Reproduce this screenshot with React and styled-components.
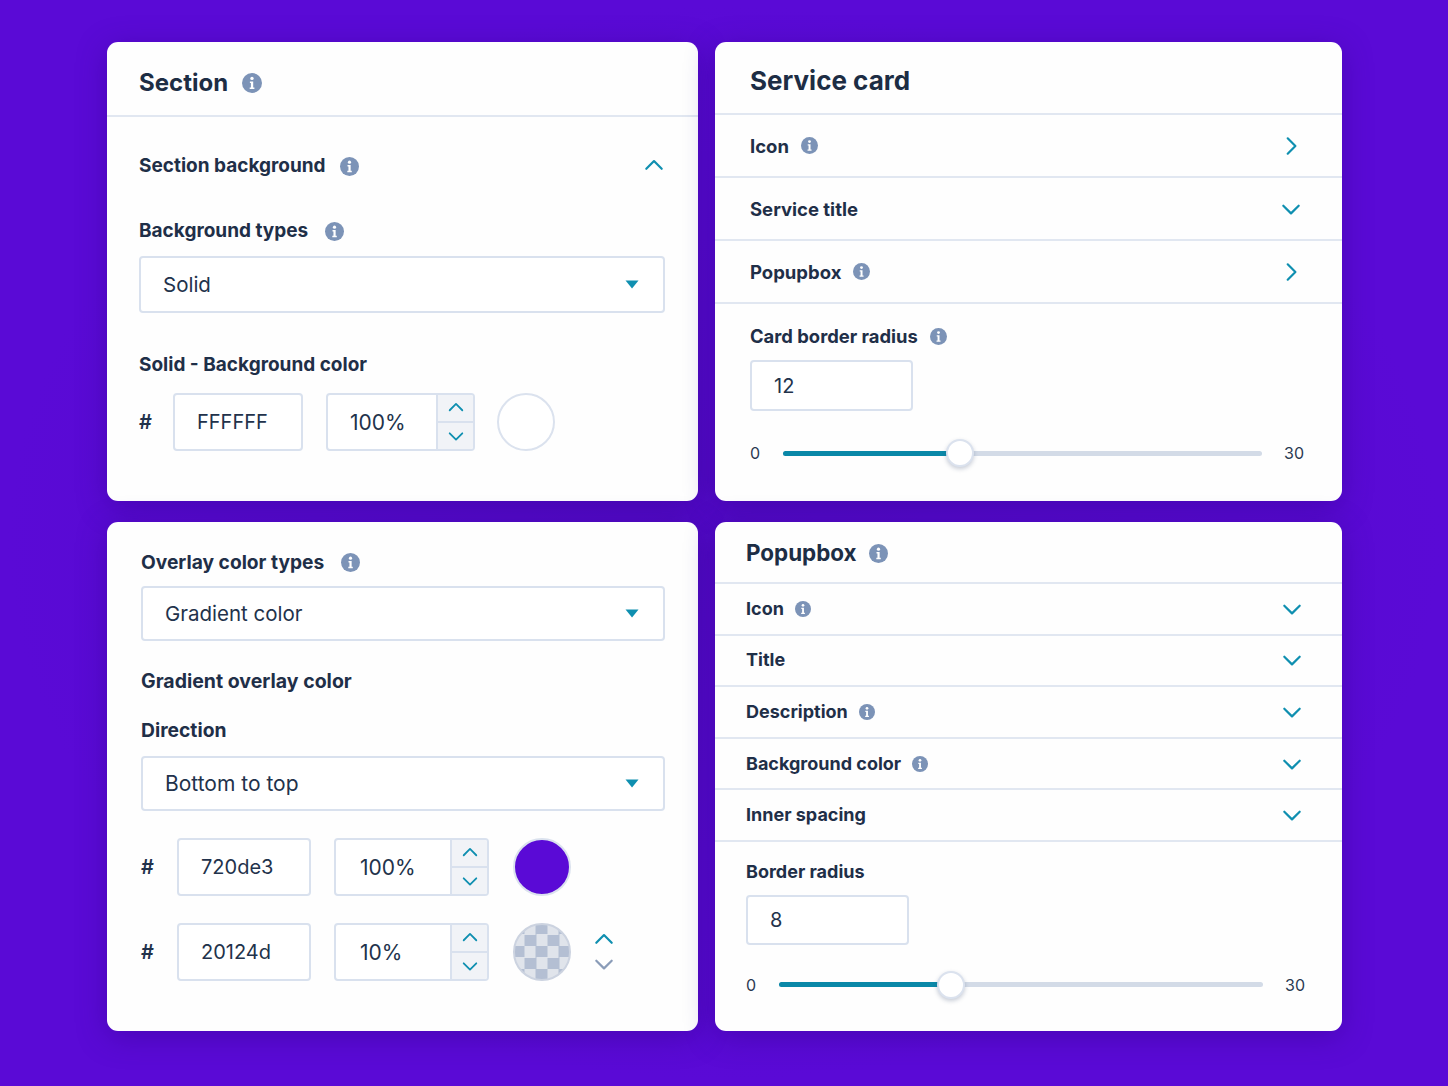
import styled, { createGlobalStyle } from "styled-components";

const GlobalStyle = createGlobalStyle`
  html, body {
    margin: 0;
    padding: 0;
    background: #5a0ad6;
  }
  * {
    box-sizing: border-box;
  }
`;

const InfoIcon = ({ size = 19 }) => (
  <svg width={size} height={size} viewBox="0 0 20 20" style={{ flexShrink: 0 }}>
    <circle cx="10" cy="10" r="10" fill="#7c93b7" />
    <circle cx="10" cy="5.4" r="1.7" fill="#fff" />
    <path d="M7.9 8.4h3.3v6.2h1.2v1.5H7.7v-1.5h1.2V9.9h-1z" fill="#fff" />
  </svg>
);

const Chevron = ({ dir = "down", size = 20, width = 2, color = "#0f8fb0" }) => {
  const paths = {
    up: "M3 12.5l7-7 7 7",
    down: "M3 7l7 7 7-7",
    right: "M7 3l7 7-7 7",
  };
  return (
    <svg width={size} height={size} viewBox="0 0 20 20" fill="none" style={{ flexShrink: 0 }}>
      <path d={paths[dir]} stroke={color} strokeWidth={width} strokeLinecap="round" strokeLinejoin="round" />
    </svg>
  );
};

const Caret = () => (
  <svg width="14" height="9" viewBox="0 0 14 9" style={{ flexShrink: 0 }}>
    <path d="M0.5 0.5h13L7 8.5z" fill="#0f8fb0" />
  </svg>
);

const Page = styled.div`
  width: 1448px;
  height: 1086px;
  padding: 42px 0 0 107px;
  background: radial-gradient(ellipse at center, #530ac8 0%, #5a0ad6 70%);
  font-family: Inter, "Noto Sans", sans-serif;
  color: #1f2f48;
  overflow: hidden;
`;

const Grid = styled.div`
  display: grid;
  grid-template-columns: 591px 627px;
  grid-template-rows: 459px 509px;
  column-gap: 17px;
  row-gap: 21px;
`;

const Card = styled.div`
  background: #fefefe;
  border-radius: 11px;
  box-shadow: 0 6px 30px rgba(50, 0, 140, 0.45);
`;

const Header = styled.div`
  display: flex;
  align-items: center;
  gap: ${(p) => p.$gap || 14}px;
  height: ${(p) => p.$height}px;
  padding: ${(p) => p.$top || 0}px 0 0 ${(p) => p.$left}px;
  border-bottom: 2px solid #e1e7f1;
`;

const Title = styled.h2`
  margin: 0;
  font-size: ${(p) => p.$size}px;
  line-height: 30px;
  font-weight: 700;
  color: #1d2d44;
`;

const Body = styled.div`
  padding: ${(p) => p.$padding};
`;

const LabelRow = styled.div`
  display: flex;
  align-items: center;
  justify-content: ${(p) => (p.$spread ? "space-between" : "flex-start")};
  gap: ${(p) => p.$gap || 14}px;
  height: 24px;
  margin-top: ${(p) => p.$top || 0}px;
  margin-bottom: ${(p) => p.$bottom || 0}px;
`;

const LabelGroup = styled.div`
  display: flex;
  align-items: center;
  gap: ${(p) => p.$gap || 14}px;
`;

const Label = styled.span`
  font-size: ${(p) => p.$size || 19}px;
  font-weight: 700;
  line-height: 24px;
  color: #1f2f48;
`;

const Select = styled.div`
  display: flex;
  align-items: center;
  justify-content: space-between;
  height: ${(p) => p.$height}px;
  padding: 0 24px 0 22px;
  border: 2px solid #d9e1ee;
  border-radius: 4px;
  background: #fff;
  font-size: ${(p) => p.$size || 20.5}px;
  color: #22324b;
`;

const ColorRow = styled.div`
  display: flex;
  align-items: center;
  height: ${(p) => p.$height || 58}px;
  margin-top: ${(p) => p.$top || 0}px;
`;

const Hash = styled.span`
  width: ${(p) => p.$width}px;
  font-size: 20px;
  font-weight: 600;
  color: #22324b;
`;

const ValueBox = styled.div`
  display: flex;
  align-items: center;
  width: ${(p) => p.$width}px;
  height: ${(p) => p.$height || 58}px;
  padding-left: 22px;
  border: 2px solid #d9e1ee;
  border-radius: 4px;
  background: #fff;
  font-size: 20px;
  color: #22324b;
`;

const Stepper = styled.div`
  display: flex;
  width: ${(p) => p.$width}px;
  height: 58px;
  margin-left: 23px;
  border: 2px solid #d9e1ee;
  border-radius: 4px;
  overflow: hidden;
  background: #fff;
`;

const StepValue = styled.div`
  flex: 1;
  display: flex;
  align-items: center;
  padding-left: ${(p) => p.$left}px;
  font-size: 21px;
  color: #22324b;
`;

const StepButtons = styled.div`
  width: 37px;
  display: flex;
  flex-direction: column;
  border-left: 2px solid #d9e1ee;
  background: #f1f3f7;
`;

const StepButton = styled.div`
  flex: 1;
  display: flex;
  align-items: center;
  justify-content: center;
  & + & {
    border-top: 2px solid #d9e1ee;
  }
`;

const Swatch = styled.div`
  width: ${(p) => p.$size}px;
  height: ${(p) => p.$size}px;
  margin-left: ${(p) => p.$left}px;
  border-radius: 50%;
  flex-shrink: 0;
  border: 2px solid #dbe2ee;
  background: ${(p) => p.$color || "#fff"};
`;

const CheckSwatch = styled(Swatch)`
  border-color: #ccd3e0;
  background: repeating-conic-gradient(#b4bfd3 0% 25%, #e0e4eb 0% 50%) 9.5px -2px / 23px 23px;
`;

const SortButtons = styled.div`
  display: flex;
  flex-direction: column;
  align-items: center;
  gap: 2px;
  margin-left: 22px;
`;

const AccordionRow = styled.div`
  display: flex;
  align-items: center;
  justify-content: space-between;
  height: ${(p) => p.$height}px;
  padding: ${(p) => p.$padding};
  border-bottom: 2px solid #e1e7f1;
`;

const SliderRow = styled.div`
  display: flex;
  align-items: center;
  height: 28px;
  margin-top: ${(p) => p.$top}px;
  font-size: 16px;
  color: #2b3a52;
`;

const SliderEnd = styled.span`
  width: ${(p) => p.$width}px;
  flex-shrink: 0;
`;

const Track = styled.div`
  position: relative;
  flex-shrink: 0;
  width: ${(p) => p.$width}px;
  height: 5px;
  margin-right: 22px;
  border-radius: 3px;
  background: #d3dbe7;
`;

const TrackFill = styled.div`
  height: 100%;
  border-radius: 3px;
  background: #0a88a8;
`;

const Thumb = styled.div`
  position: absolute;
  top: 50%;
  width: 28px;
  height: 28px;
  border-radius: 50%;
  border: 2px solid #dbe2ee;
  background: #fff;
  box-shadow: 0 2px 4px rgba(40, 60, 100, 0.25);
  transform: translate(-50%, -50%);
`;

const Slider = ({ top, left, width, at, max }) => (
  <SliderRow $top={top}>
    <SliderEnd $width={left}>0</SliderEnd>
    <Track $width={width}>
      <TrackFill style={{ width: at }} />
      <Thumb style={{ left: at }} />
    </Track>
    <SliderEnd $width={30}>{max}</SliderEnd>
  </SliderRow>
);

const PercentBox = ({ value, width, left = 22 }) => (
  <Stepper $width={width}>
    <StepValue $left={left}>{value}</StepValue>
    <StepButtons>
      <StepButton>
        <Chevron dir="up" size={18} />
      </StepButton>
      <StepButton>
        <Chevron dir="down" size={18} />
      </StepButton>
    </StepButtons>
  </Stepper>
);

const serviceRows = [
  { label: "Icon", info: true, dir: "right" },
  { label: "Service title", dir: "down" },
  { label: "Popupbox", info: true, dir: "right" },
];

const popupRows = [
  { label: "Icon", info: true },
  { label: "Title" },
  { label: "Description", info: true },
  { label: "Background color", info: true },
  { label: "Inner spacing" },
];

const App = () => {
  return (
    <Page>
      <GlobalStyle />
      <Grid>
        <Card>
          <Header $height={75} $left={32} $top={8}>
            <Title $size={24}>Section</Title>
            <InfoIcon size={20} />
          </Header>
          <Body $padding="37px 33px 0 32px">
            <LabelRow $spread>
              <LabelGroup>
                <Label>Section background</Label>
                <InfoIcon />
              </LabelGroup>
              <Chevron dir="up" size={22} />
            </LabelRow>
            <LabelRow $top={41} $bottom={13} $gap={17}>
              <Label>Background types</Label>
              <InfoIcon />
            </LabelRow>
            <Select $height={57}>
              Solid
              <Caret />
            </Select>
            <LabelRow $top={40} $bottom={16}>
              <Label>Solid - Background color</Label>
            </LabelRow>
            <ColorRow>
              <Hash $width={34}>#</Hash>
              <ValueBox $width={130}>FFFFFF</ValueBox>
              <PercentBox value="100%" width={149} />
              <Swatch $size={58} $left={22} />
            </ColorRow>
          </Body>
        </Card>

        <Card>
          <Header $height={73} $left={35} $top={7}>
            <Title $size={26}>Service card</Title>
          </Header>
          {serviceRows.map((row) => (
            <AccordionRow key={row.label} $height={63} $padding="0 40px 0 35px">
              <LabelGroup $gap={12}>
                <Label $size={18.5}>{row.label}</Label>
                {row.info && <InfoIcon size={17} />}
              </LabelGroup>
              <Chevron dir={row.dir} size={22} />
            </AccordionRow>
          ))}
          <Body $padding="20px 28px 0 35px">
            <LabelRow $bottom={12} $gap={12}>
              <Label $size={18.4}>Card border radius</Label>
              <InfoIcon size={17} />
            </LabelRow>
            <ValueBox $width={163} $height={51}>12</ValueBox>
            <Slider top={28} left={33} width={479} at="37%" max="30" />
          </Body>
        </Card>

        <Card>
          <Body $padding="28px 33px 0 34px">
            <LabelRow $bottom={12} $gap={17}>
              <Label $size={19.2}>Overlay color types</Label>
              <InfoIcon />
            </LabelRow>
            <Select $height={55}>
              Gradient color
              <Caret />
            </Select>
            <LabelRow $top={28}>
              <Label $size={19.5}>Gradient overlay color</Label>
            </LabelRow>
            <LabelRow $top={25} $bottom={14}>
              <Label $size={19.3}>Direction</Label>
            </LabelRow>
            <Select $height={55} $size={21}>
              Bottom to top
              <Caret />
            </Select>
            <ColorRow $top={27}>
              <Hash $width={36}>#</Hash>
              <ValueBox $width={134}>720de3</ValueBox>
              <PercentBox value="100%" width={155} left={24} />
              <Swatch $size={58} $left={24} $color="#5a0ad6" />
            </ColorRow>
            <ColorRow $top={27}>
              <Hash $width={36}>#</Hash>
              <ValueBox $width={134}>20124d</ValueBox>
              <PercentBox value="10%" width={155} left={24} />
              <CheckSwatch $size={58} $left={24} />
              <SortButtons>
                <Chevron dir="up" size={22} />
                <Chevron dir="down" size={22} color="#8a9cb8" />
              </SortButtons>
            </ColorRow>
          </Body>
        </Card>

        <Card>
          <Header $height={62} $left={31} $gap={12} $top={2}>
            <Title $size={22.4}>Popupbox</Title>
            <InfoIcon />
          </Header>
          {popupRows.map((row) => (
            <AccordionRow key={row.label} $height={51.6} $padding="0 39px 0 31px">
              <LabelGroup $gap={11}>
                <Label $size={18}>{row.label}</Label>
                {row.info && <InfoIcon size={16} />}
              </LabelGroup>
              <Chevron size={22} />
            </AccordionRow>
          ))}
          <Body $padding="18px 27px 0 31px">
            <LabelRow $bottom={11}>
              <Label $size={18}>Border radius</Label>
            </LabelRow>
            <ValueBox $width={163} $height={50}>8</ValueBox>
            <Slider top={26} left={33} width={484} at="35.6%" max="30" />
          </Body>
        </Card>
      </Grid>
    </Page>
  );
};

export default App;
